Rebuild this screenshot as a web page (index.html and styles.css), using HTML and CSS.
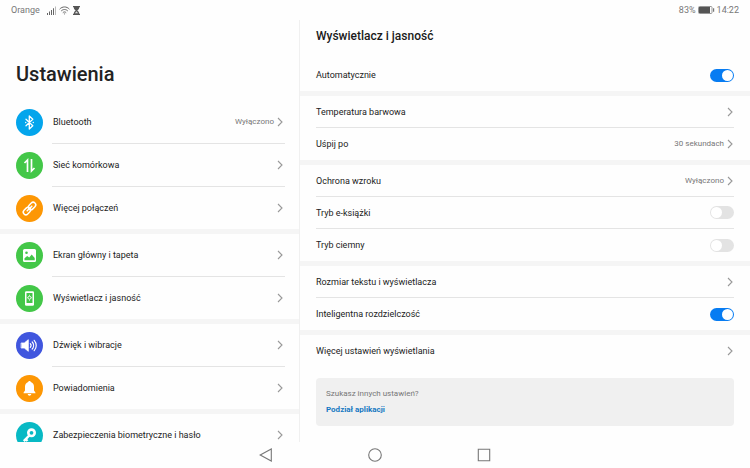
FILE: index.html
```html
<!DOCTYPE html>
<html lang="pl">
<head>
    <meta charset="UTF-8">
    <meta name="viewport" content="width=device-width, initial-scale=1.0">
    <title>Ustawienia</title>
    <link rel="stylesheet" href="styles.css">
</head>
<body>
    <svg class="sprite" aria-hidden="true">
        <symbol id="chevron" viewBox="0 0 6 10">
            <path d="M1 1l4 4-4 4" fill="none" stroke="currentColor" stroke-width="1.1"/>
        </symbol>
    </svg>

    <header class="status-bar">
        <div class="status-group">
            <span class="carrier">Orange</span>
            <svg width="9" height="9" viewBox="0 0 9 9" fill="#666">
                <path d="M0 7h1v2H0zM2 5.500h1V9H2zM4 4h1v5H4zM6 2.300h1V9H6z"/>
                <path d="M8 .5h.8V9H8z" fill="#aaa"/>
            </svg>
            <svg width="11" height="9" viewBox="0 0 11 9" fill="none" stroke="#666" stroke-width="1">
                <path d="M.6 3.200C3.300.2 7.700.2 10.400 3.200M2.200 5c1.800-2 4.800-2 6.600 0M3.800 6.700c1-1 2.400-1 3.400 0"/>
                <path d="M4.700 7.500h1.600l-.8 1.200z" fill="#666" stroke="none"/>
            </svg>
            <svg width="7" height="9" viewBox="0 0 7 9" fill="#555">
                <path d="M0 0h7v1.200H0zM0 7.800h7V9H0zM.8 1.200h5.400c0 1.800-.9 2.500-2 3.300 1.100.8 2 1.500 2 3.300H.8c0-1.800.9-2.500 2-3.300-1.100-.8-2-1.500-2-3.300z"/>
                <path d="M3.500 5.200l1.600 2H1.900z" fill="#ddd"/>
            </svg>
        </div>
        <div class="status-group right">
            <span>83%</span>
            <svg width="17" height="8" viewBox="0 0 17 8">
                <rect x=".5" y=".5" width="13.500" height="7" rx="1" fill="none" stroke="#999"/>
                <path d="M1 1h11v6H1z" fill="#555"/>
                <path d="M15 2.200h1.200v3.600H15z" fill="#777"/>
            </svg>
            <span>14:22</span>
        </div>
    </header>

    <main class="panes">
        <section class="sidebar">
            <h1>Ustawienia</h1>
            <nav>
                <ul class="group">
                    <li><a class="item" href="#bluetooth">
                        <svg class="icon blue" viewBox="0 0 27 27" fill="none" stroke="#fff" stroke-width="1.300" stroke-linejoin="round" stroke-linecap="round">
                            <path d="M10 10.200l6.800 6.500-3.500 3.300V7l3.500 3.300-6.800 6.500"/>
                            <path d="M9.700 13.500h.1M17.200 13.500h.1"/>
                        </svg>
                        <span class="item-body"><span class="label">Bluetooth</span><span class="value">Wyłączono</span><svg class="chevron"><use href="#chevron"/></svg></span>
                    </a></li>
                    <li><a class="item" href="#siec">
                        <svg class="icon green" viewBox="0 0 27 27" fill="none" stroke="#fff" stroke-width="1.700">
                            <path d="M11.500 20V8L8.500 11M15.500 7v12l3-3"/>
                        </svg>
                        <span class="item-body"><span class="label">Sieć komórkowa</span><svg class="chevron"><use href="#chevron"/></svg></span>
                    </a></li>
                    <li><a class="item" href="#polaczenia">
                        <svg class="icon orange" viewBox="0 0 27 27" fill="none" stroke="#fff" stroke-width="1.500">
                            <g transform="rotate(-45 13.500 13.500)">
                                <rect x="5.800" y="10.900" width="8.200" height="5.200" rx="2.600"/>
                                <rect x="13" y="10.900" width="8.200" height="5.200" rx="2.600"/>
                                <path d="M10.200 13.500h6.600" stroke-linecap="round"/>
                            </g>
                        </svg>
                        <span class="item-body"><span class="label">Więcej połączeń</span><svg class="chevron"><use href="#chevron"/></svg></span>
                    </a></li>
                </ul>
                <ul class="group">
                    <li><a class="item" href="#ekran">
                        <svg class="icon green" viewBox="0 0 27 27">
                            <rect x="7" y="7" width="13" height="13" rx="1.500" fill="#fff"/>
                            <circle cx="10.500" cy="10.700" r="1.300" fill="#43c748"/>
                            <path d="M8.500 18.300v-2l2.700-2.300 2 1.600 2.500-3 3 3.500v2.200z" fill="#43c748"/>
                        </svg>
                        <span class="item-body"><span class="label">Ekran główny i tapeta</span><svg class="chevron"><use href="#chevron"/></svg></span>
                    </a></li>
                    <li><a class="item" href="#wyswietlacz">
                        <svg class="icon green" viewBox="0 0 27 27">
                            <rect x="9" y="6.200" width="9" height="14.600" rx="1.300" fill="#fff"/>
                            <path d="M10.500 8h6v10h-6z" fill="#43c748"/>
                            <circle cx="13.500" cy="12.700" r="1.500" fill="none" stroke="#fff" stroke-width=".9"/>
                            <path d="M13.500 9.800v.9M13.500 14.700v.9M11 12.700h.6M15.400 12.700h.6" stroke="#fff" stroke-width=".9"/>
                        </svg>
                        <span class="item-body"><span class="label">Wyświetlacz i jasność</span><svg class="chevron"><use href="#chevron"/></svg></span>
                    </a></li>
                </ul>
                <ul class="group">
                    <li><a class="item" href="#dzwiek">
                        <svg class="icon indigo" viewBox="0 0 27 27" fill="none" stroke="#fff" stroke-width="1.200" stroke-linecap="round">
                            <path d="M5.500 11h2.800l4-3.300v11.600l-4-3.300H5.500z" fill="#fff" stroke-linejoin="round" stroke-width=".8"/>
                            <path d="M14.300 11.700c.9 1 .9 2.600 0 3.600M16.200 10c1.800 2 1.800 5 0 7M18.200 8.300c2.700 3 2.700 7.400 0 10.400"/>
                        </svg>
                        <span class="item-body"><span class="label">Dźwięk i wibracje</span><svg class="chevron"><use href="#chevron"/></svg></span>
                    </a></li>
                    <li><a class="item" href="#powiadomienia">
                        <svg class="icon orange" viewBox="0 0 27 27" fill="#fff">
                            <path d="M13.500 6c.8 0 1.200.5 1.300 1.100 2 .6 3.200 2.300 3.200 4.600v3.600c0 .9 1.500 1.600 1.500 2.900h-12c0-1.300 1.500-2 1.500-2.900v-3.600c0-2.300 1.200-4 3.200-4.600.1-.6.500-1.100 1.300-1.100zM11.700 19h3.600c-.2 1.100-.9 1.700-1.800 1.700s-1.600-.6-1.800-1.700z"/>
                        </svg>
                        <span class="item-body"><span class="label">Powiadomienia</span><svg class="chevron"><use href="#chevron"/></svg></span>
                    </a></li>
                </ul>
                <ul class="group">
                    <li><a class="item" href="#zabezpieczenia">
                        <svg class="icon teal" viewBox="0 0 27 27" fill="none" stroke="#fff">
                            <circle cx="15.500" cy="10.800" r="3.200" stroke-width="2.600"/>
                            <path d="M13.200 13.500l-5.400 5.700M9.500 17l2 2" stroke-width="2.400"/>
                        </svg>
                        <span class="item-body"><span class="label">Zabezpieczenia biometryczne i hasło</span><svg class="chevron"><use href="#chevron"/></svg></span>
                    </a></li>
                </ul>
            </nav>
        </section>

        <section class="details">
            <h2>Wyświetlacz i jasność</h2>
            <ul class="group">
                <li class="row">
                    <label class="label" for="auto">Automatycznie</label>
                    <input class="switch" type="checkbox" id="auto" checked>
                </li>
            </ul>
            <ul class="group">
                <li><a class="row" href="#temperatura"><span class="label">Temperatura barwowa</span><svg class="chevron"><use href="#chevron"/></svg></a></li>
                <li><a class="row" href="#uspij"><span class="label">Uśpij po</span><span class="value">30 sekundach</span><svg class="chevron"><use href="#chevron"/></svg></a></li>
            </ul>
            <ul class="group">
                <li><a class="row" href="#ochrona"><span class="label">Ochrona wzroku</span><span class="value">Wyłączono</span><svg class="chevron"><use href="#chevron"/></svg></a></li>
                <li class="row">
                    <label class="label" for="ebook">Tryb e-książki</label>
                    <input class="switch" type="checkbox" id="ebook">
                </li>
                <li class="row">
                    <label class="label" for="dark">Tryb ciemny</label>
                    <input class="switch" type="checkbox" id="dark">
                </li>
            </ul>
            <ul class="group">
                <li><a class="row" href="#rozmiar"><span class="label">Rozmiar tekstu i wyświetlacza</span><svg class="chevron"><use href="#chevron"/></svg></a></li>
                <li class="row">
                    <label class="label" for="resolution">Inteligentna rozdzielczość</label>
                    <input class="switch" type="checkbox" id="resolution" checked>
                </li>
            </ul>
            <ul class="group">
                <li><a class="row" href="#wiecej"><span class="label">Więcej ustawień wyświetlania</span><svg class="chevron"><use href="#chevron"/></svg></a></li>
            </ul>
            <aside class="hint">
                <p>Szukasz innych ustawień?</p>
                <a href="#podzial">Podział aplikacji</a>
            </aside>
        </section>
    </main>

    <footer class="nav-bar">
        <button type="button" aria-label="Wstecz">
            <svg width="14" height="14" viewBox="0 0 14 14"><path d="M12.300 1v12L1.200 7z"/></svg>
        </button>
        <button type="button" aria-label="Ekran główny">
            <svg width="14" height="14" viewBox="0 0 14 14"><circle cx="7" cy="7" r="6.300"/></svg>
        </button>
        <button type="button" aria-label="Ostatnie">
            <svg width="14" height="14" viewBox="0 0 14 14"><path d="M1.300 1.300h11.400v11.400H1.300z"/></svg>
        </button>
    </footer>
</body>
</html>
```

FILE: styles.css
```css
* {
    box-sizing: border-box;
}
body {
    margin: 0;
    height: 100vh;
    display: flex;
    flex-direction: column;
    font-family: Roboto, "Liberation Sans", sans-serif;
    font-size: 9px;
    line-height: 12px;
    color: #222;
    background: #fefefe;
}
h1, h2, p, ul {
    margin: 0;
    padding: 0;
}
ul {
    list-style: none;
}
a {
    color: inherit;
    text-decoration: none;
}
.sprite {
    display: none;
}

/* status bar */
.status-bar {
    flex: none;
    display: flex;
    justify-content: space-between;
    height: 20px;
    padding: 0 11px;
    color: #777;
}
.status-group {
    display: flex;
    align-items: center;
    gap: 3px;
}
.status-group.right {
    gap: 2px;
}
.carrier {
    margin-right: 4px;
}

/* two panes */
.panes {
    flex: 1;
    min-height: 0;
    display: grid;
    grid-template-columns: 2fr 3fr;
}
.sidebar {
    overflow: hidden;
    border-right: 1px solid #f0f0f0;
}
.details {
    overflow: hidden;
}
h1 {
    padding: 40px 16px 13px;
    font-size: 20px;
    line-height: 28px;
    font-weight: 500;
}
h2 {
    padding: 8px 16px 15px;
    font-size: 12px;
    line-height: 16px;
    font-weight: 500;
    color: #1a1a1a;
}
.group + .group {
    border-top: 5px solid #f5f5f5;
}
.label {
    flex: 1;
}
.value {
    margin-right: 3px;
    font-size: 8px;
    color: #777;
}
.chevron {
    width: 6px;
    height: 10px;
    margin-right: 2px;
    color: #999;
}

/* left list */
.item {
    display: flex;
    padding-left: 16px;
}
.item-body {
    flex: 1;
    display: flex;
    align-items: center;
    height: 42px;
    margin: 0 14px 0 9px;
    padding-left: 1px;
}
li:not(:last-child) .item-body {
    height: 43px;
    border-bottom: 1px solid #e4e4e4;
}
.icon {
    width: 27px;
    height: 27px;
    margin-top: 8px;
    border-radius: 50%;
}
.blue {
    background: #03a5ec;
}
.green {
    background: #43c748;
}
.orange {
    background: #fd9704;
}
.indigo {
    background: #4056de;
}
.teal {
    background: #08b9c4;
}

/* right list */
.details li {
    margin: 0 16px;
}
.row {
    display: flex;
    align-items: center;
    height: 32px;
}
.row .chevron {
    margin-right: 1px;
}
.details li:not(:last-child) {
    border-bottom: 1px solid #e4e4e4;
}
.details li:not(:last-child) .row {
    height: 31px;
}
.switch {
    appearance: none;
    display: flex;
    width: 24px;
    height: 13px;
    margin: 0;
    padding: 1px;
    border-radius: 7px;
    background: #e3e3e3;
}
.switch::before {
    content: "";
    width: 11px;
    height: 11px;
    border-radius: 50%;
    background: #fff;
}
.switch:checked {
    justify-content: flex-end;
    background: #077cf2;
}
.hint {
    margin: 11px 16px 0;
    padding: 10px;
    border-radius: 4px;
    background: #f0f0f0;
    font-size: 8px;
    color: #777;
}
.hint p {
    margin-bottom: 4px;
}
.hint a {
    display: block;
    font-weight: 700;
    color: #1678c2;
}

/* system buttons */
.nav-bar {
    flex: none;
    display: flex;
    justify-content: center;
    align-items: center;
    gap: 95px;
    height: 26px;
}
.nav-bar button {
    display: flex;
    padding: 0;
    border: 0;
    background: none;
}
.nav-bar svg {
    fill: none;
    stroke: #777;
    stroke-width: 1.1;
}
```
